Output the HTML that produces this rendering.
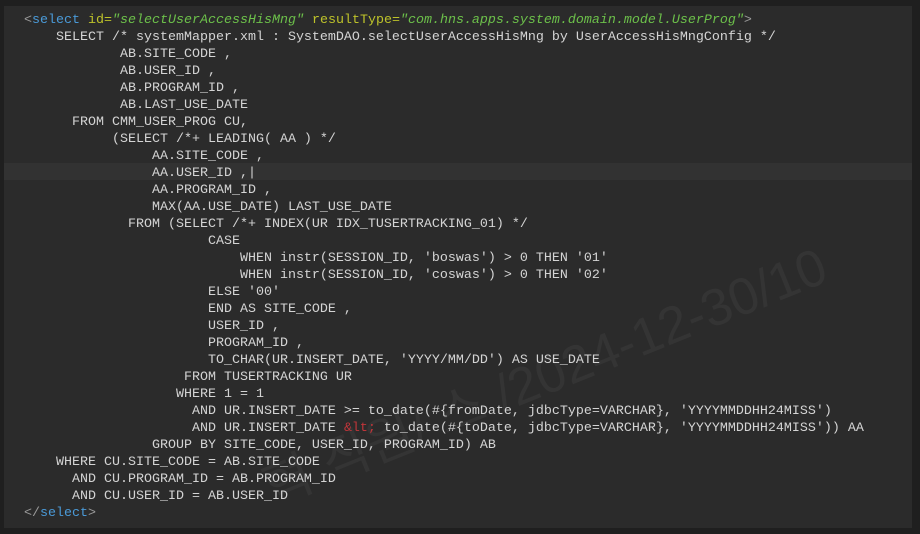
<!DOCTYPE html>
<html><head><meta charset="utf-8"><style>
html,body{margin:0;padding:0;background:#1f1f1f;width:920px;height:534px;overflow:hidden}
.p{position:absolute;left:4px;top:6px;width:908px;height:522px;background:#2b2b2b}
.hl{position:absolute;left:4px;top:163px;width:908px;height:17px;background:#323232}
pre{position:absolute;left:24px;top:12px;margin:0;font-family:"Liberation Mono","Courier New",monospace;font-size:13.33px;line-height:17px;color:#d4d4d4}
.t{color:#4a9ad8}.g{color:#9a9a9a}.a{color:#bdc22a}.v{color:#6cc04a;font-style:italic}.r{color:#c0353a}
.wm{position:absolute;left:250px;top:450px;font-family:"Liberation Sans","Noto Sans CJK KR",sans-serif;font-size:52px;color:rgba(255,255,255,0.045);transform:rotate(-22deg);transform-origin:left top;white-space:nowrap}
</style></head><body>
<div class="p"></div><div class="hl"></div>
<div class="wm">혁 직원/ 스 /2024-12-30/10</div>
<pre><span class="g">&lt;</span><span class="t">select</span> <span class="a">id=</span><span class="v">"selectUserAccessHisMng"</span> <span class="a">resultType=</span><span class="v">"com.hns.apps.system.domain.model.UserProg"</span><span class="g">&gt;</span>
    SELECT /* systemMapper.xml : SystemDAO.selectUserAccessHisMng by UserAccessHisMngConfig */
            AB.SITE_CODE ,
            AB.USER_ID ,
            AB.PROGRAM_ID ,
            AB.LAST_USE_DATE
      FROM CMM_USER_PROG CU,
           (SELECT /*+ LEADING( AA ) */
                AA.SITE_CODE ,
                AA.USER_ID ,|
                AA.PROGRAM_ID ,
                MAX(AA.USE_DATE) LAST_USE_DATE
             FROM (SELECT /*+ INDEX(UR IDX_TUSERTRACKING_01) */
                       CASE
                           WHEN instr(SESSION_ID, 'boswas') &gt; 0 THEN '01'
                           WHEN instr(SESSION_ID, 'coswas') &gt; 0 THEN '02'
                       ELSE '00'
                       END AS SITE_CODE ,
                       USER_ID ,
                       PROGRAM_ID ,
                       TO_CHAR(UR.INSERT_DATE, 'YYYY/MM/DD') AS USE_DATE
                    FROM TUSERTRACKING UR
                   WHERE 1 = 1
                     AND UR.INSERT_DATE &gt;= to_date(#{fromDate, jdbcType=VARCHAR}, 'YYYYMMDDHH24MISS')
                     AND UR.INSERT_DATE <span class="r">&amp;lt;</span> to_date(#{toDate, jdbcType=VARCHAR}, 'YYYYMMDDHH24MISS')) AA
                GROUP BY SITE_CODE, USER_ID, PROGRAM_ID) AB
    WHERE CU.SITE_CODE = AB.SITE_CODE
      AND CU.PROGRAM_ID = AB.PROGRAM_ID
      AND CU.USER_ID = AB.USER_ID
<span class="g">&lt;/</span><span class="t">select</span><span class="g">&gt;</span></pre>
</body></html>
